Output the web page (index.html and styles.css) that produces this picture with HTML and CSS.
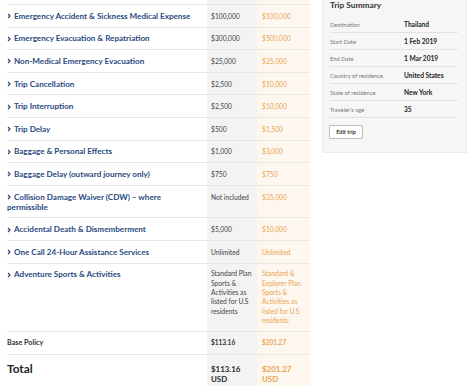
FILE: index.html
```html
<!DOCTYPE html>
<html lang="en">
<head>
<meta charset="utf-8">
<title>Plan comparison</title>
<link rel="stylesheet" href="styles.css">
</head>
<body>
<div class="page">
  <div class="plans">
    <div class="row spacer"><div class="cell label"></div><div class="cell std"></div><div class="cell exp"></div></div>

    <div class="row"><div class="cell label"><svg class="chev" viewBox="0 0 4 6"><polyline points="1,1 3,3 1,5"/></svg>Emergency Accident &amp; Sickness Medical Expense</div><div class="cell std">$100,000</div><div class="cell exp">$100,000</div></div>
    <div class="row"><div class="cell label"><svg class="chev" viewBox="0 0 4 6"><polyline points="1,1 3,3 1,5"/></svg>Emergency Evacuation &amp; Repatriation</div><div class="cell std">$300,000</div><div class="cell exp">$500,000</div></div>
    <div class="row"><div class="cell label"><svg class="chev" viewBox="0 0 4 6"><polyline points="1,1 3,3 1,5"/></svg>Non-Medical Emergency Evacuation</div><div class="cell std">$25,000</div><div class="cell exp">$25,000</div></div>
    <div class="row"><div class="cell label"><svg class="chev" viewBox="0 0 4 6"><polyline points="1,1 3,3 1,5"/></svg>Trip Cancellation</div><div class="cell std">$2,500</div><div class="cell exp">$10,000</div></div>
    <div class="row"><div class="cell label"><svg class="chev" viewBox="0 0 4 6"><polyline points="1,1 3,3 1,5"/></svg>Trip Interruption</div><div class="cell std">$2,500</div><div class="cell exp">$10,000</div></div>
    <div class="row"><div class="cell label"><svg class="chev" viewBox="0 0 4 6"><polyline points="1,1 3,3 1,5"/></svg>Trip Delay</div><div class="cell std">$500</div><div class="cell exp">$1,500</div></div>
    <div class="row"><div class="cell label"><svg class="chev" viewBox="0 0 4 6"><polyline points="1,1 3,3 1,5"/></svg>Baggage &amp; Personal Effects</div><div class="cell std">$1,000</div><div class="cell exp">$3,000</div></div>
    <div class="row"><div class="cell label"><svg class="chev" viewBox="0 0 4 6"><polyline points="1,1 3,3 1,5"/></svg>Baggage Delay (outward journey only)</div><div class="cell std">$750</div><div class="cell exp">$750</div></div>
    <div class="row"><div class="cell label"><svg class="chev" viewBox="0 0 4 6"><polyline points="1,1 3,3 1,5"/></svg>Collision Damage Waiver (CDW) – where permissible</div><div class="cell std">Not included</div><div class="cell exp">$35,000</div></div>
    <div class="row"><div class="cell label"><svg class="chev" viewBox="0 0 4 6"><polyline points="1,1 3,3 1,5"/></svg>Accidental Death &amp; Dismemberment</div><div class="cell std">$5,000</div><div class="cell exp">$10,000</div></div>
    <div class="row"><div class="cell label"><svg class="chev" viewBox="0 0 4 6"><polyline points="1,1 3,3 1,5"/></svg>One Call 24-Hour Assistance Services</div><div class="cell std">Unlimited</div><div class="cell exp">Unlimited</div></div>
    <div class="row"><div class="cell label"><svg class="chev" viewBox="0 0 4 6"><polyline points="1,1 3,3 1,5"/></svg>Adventure Sports &amp; Activities</div><div class="cell std small">Standard Plan Sports &amp; Activities as listed for U.S residents</div><div class="cell exp small">Standard &amp; Explorer Plan Sports &amp; Activities as listed for U.S residents</div></div>

    <div class="row base"><div class="cell label">Base Policy</div><div class="cell std">$113.16</div><div class="cell exp">$201.27</div></div>
    <div class="row total"><div class="cell label">Total</div><div class="cell std">$113.16 USD</div><div class="cell exp">$201.27 USD</div></div>
  </div>

  <aside class="summary">
    <h2 class="summary-title">Trip Summary</h2>
    <dl class="facts">
      <div class="fact"><dt>Destination</dt><dd>Thailand</dd></div>
      <div class="fact"><dt>Start Date</dt><dd>1 Feb 2019</dd></div>
      <div class="fact"><dt>End Date</dt><dd>1 Mar 2019</dd></div>
      <div class="fact"><dt>Country of residence</dt><dd>United States</dd></div>
      <div class="fact"><dt>State of residence</dt><dd>New York</dd></div>
      <div class="fact"><dt>Traveler's age</dt><dd>35</dd></div>
    </dl>
    <button class="edit" type="button">Edit trip</button>
  </aside>
</div>
</body>
</html>
```

FILE: styles.css
```css
html, body {
  margin: 0;
  padding: 0;
  background: #ffffff;
}

body {
  font-family: Lato, "Liberation Sans", Arial, sans-serif;
  color: #333333;
}

.page {
  display: flex;
  align-items: flex-start;
  padding-left: 7px;
  height: 386px;
  overflow: hidden;
}

.plans {
  width: 303px;
  flex: none;
}

.row {
  display: grid;
  grid-template-columns: 200px 50px 53px;
  border-bottom: 1px solid #e7e7e7;
}

.cell {
  padding: 5.8px 0;
  line-height: 10px;
}

.spacer .cell {
  padding: 0;
  height: 4px;
}

.label {
  padding-right: 12px;
  font-size: 8.1px;
  font-weight: 700;
  color: #2a4a7f;
}

.chev {
  width: 4px;
  height: 6px;
  margin: 0 3px 0 0;
  vertical-align: -0.5px;
  fill: none;
  stroke: #2a3f66;
  stroke-width: 1.1;
}

.std {
  background: #f3f3f3;
  padding-left: 4px;
  padding-right: 2px;
  font-size: 6.7px;
  color: #444444;
}

.exp {
  background: #fdf7ef;
  padding-left: 5px;
  padding-right: 4px;
  font-size: 6.7px;
  color: #e9a552;
}

.small {
  line-height: 9.3px;
}

.base .label {
  color: #333333;
  font-size: 7.2px;
}

.base .std {
  font-weight: 700;
  font-size: 6.5px;
  color: #333333;
}

.base .exp {
  font-weight: 700;
  font-size: 6.5px;
}

.total {
  border-bottom: none;
}

.total .cell {
  padding-top: 9px;
  padding-bottom: 12px;
  font-weight: 700;
  font-size: 7.9px;
}

.total .label {
  padding-top: 7px;
  font-size: 11.8px;
  line-height: 14px;
  color: #222222;
}

.total .std {
  color: #2a2a2a;
}

.summary {
  width: 145px;
  margin-left: 12px;
  flex: none;
  box-sizing: border-box;
  padding: 0 8px 13px 7px;
  background: #f6f6f6;
  border: 1px solid #ececec;
  border-top: none;
}

.summary-title {
  margin: 0;
  height: 16px;
  font-size: 8.4px;
  line-height: 11px;
  font-weight: 700;
  color: #333333;
}

.facts {
  margin: 0;
}

.fact {
  display: grid;
  grid-template-columns: 74px 1fr;
  align-items: center;
  height: 16px;
  border-bottom: 1px solid #e2e2e2;
}

.fact dt {
  font-size: 5.8px;
  color: #777777;
}

.fact dd {
  margin: 0;
  font-size: 6.6px;
  font-weight: 700;
  color: #222222;
}

.edit {
  display: block;
  margin: 7px 0 0 -1px;
  width: 34px;
  height: 14px;
  padding: 0;
  background: #ffffff;
  border: 1px solid #bdbdbd;
  border-radius: 1px;
  font-family: inherit;
  font-size: 5.5px;
  font-weight: 700;
  color: #333333;
}
```
